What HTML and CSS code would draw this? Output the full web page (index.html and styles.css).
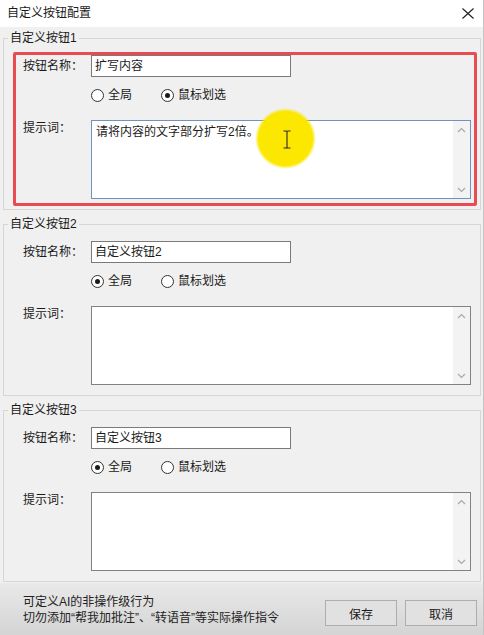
FILE: index.html
```html
<!DOCTYPE html>
<html lang="zh-CN">
<head>
<meta charset="utf-8">
<title>自定义按钮配置</title>
<link rel="stylesheet" href="styles.css">
</head>
<body>
<div class="window">
  <div class="titlebar">
    <span class="title">自定义按钮配置</span>
    <svg class="close" width="12" height="11" viewBox="0 0 12 11"><path d="M0.5 0.5L11.5 10.5M11.5 0.5L0.5 10.5" stroke="#1e1e1e" stroke-width="1.1" fill="none"/></svg>
  </div>

  <div class="content">
    <fieldset class="group">
      <legend>自定义按钮1</legend>
      <div class="name-row"><span class="lbl">按钮名称：</span><div class="input">扩写内容</div></div>
      <div class="radio-row">
        <span class="radio"><i class="circle"></i>全局</span>
        <span class="radio"><i class="circle checked"></i>鼠标划选</span>
      </div>
      <div class="prompt-row"><span class="lbl">提示词：</span>
        <div class="textbox focused">
          <div class="text">请将内容的文字部分扩写2倍。</div>
          <div class="scrollbar">
            <span class="sb-btn"><svg width="9" height="6" viewBox="0 0 9 6"><path d="M1 5L4.5 1.5L8 5" stroke="#a9a9a9" stroke-width="1.2" fill="none"/></svg></span>
            <span class="sb-btn"><svg width="9" height="6" viewBox="0 0 9 6"><path d="M1 1L4.5 4.5L8 1" stroke="#a9a9a9" stroke-width="1.2" fill="none"/></svg></span>
          </div>
        </div>
      </div>
    </fieldset>

    <fieldset class="group">
      <legend>自定义按钮2</legend>
      <div class="name-row"><span class="lbl">按钮名称：</span><div class="input">自定义按钮2</div></div>
      <div class="radio-row">
        <span class="radio"><i class="circle checked"></i>全局</span>
        <span class="radio"><i class="circle"></i>鼠标划选</span>
      </div>
      <div class="prompt-row"><span class="lbl">提示词：</span>
        <div class="textbox">
          <div class="text"></div>
          <div class="scrollbar">
            <span class="sb-btn"><svg width="9" height="6" viewBox="0 0 9 6"><path d="M1 5L4.5 1.5L8 5" stroke="#a9a9a9" stroke-width="1.2" fill="none"/></svg></span>
            <span class="sb-btn"><svg width="9" height="6" viewBox="0 0 9 6"><path d="M1 1L4.5 4.5L8 1" stroke="#a9a9a9" stroke-width="1.2" fill="none"/></svg></span>
          </div>
        </div>
      </div>
    </fieldset>

    <fieldset class="group last">
      <legend>自定义按钮3</legend>
      <div class="name-row"><span class="lbl">按钮名称：</span><div class="input">自定义按钮3</div></div>
      <div class="radio-row">
        <span class="radio"><i class="circle checked"></i>全局</span>
        <span class="radio"><i class="circle"></i>鼠标划选</span>
      </div>
      <div class="prompt-row"><span class="lbl">提示词：</span>
        <div class="textbox">
          <div class="text"></div>
          <div class="scrollbar">
            <span class="sb-btn"><svg width="9" height="6" viewBox="0 0 9 6"><path d="M1 5L4.5 1.5L8 5" stroke="#a9a9a9" stroke-width="1.2" fill="none"/></svg></span>
            <span class="sb-btn"><svg width="9" height="6" viewBox="0 0 9 6"><path d="M1 1L4.5 4.5L8 1" stroke="#a9a9a9" stroke-width="1.2" fill="none"/></svg></span>
          </div>
        </div>
      </div>
    </fieldset>
  </div>

  <div class="footer">
    <div class="hint">
      <div>可定义AI的非操作级行为</div>
      <div>切勿添加“帮我加批注”、“转语音”等实际操作指令</div>
    </div>
    <div class="buttons">
      <button class="btn">保存</button>
      <button class="btn">取消</button>
    </div>
  </div>

  <div class="annot-frame"></div>
  <div class="cursor-spot">
    <svg class="ibeam" width="10" height="19" viewBox="0 0 10 19"><path d="M1.5 1H4Q5 1 5 2.2Q5 1 6 1H8.5M5 2V17M1.5 18H4Q5 18 5 16.8Q5 18 6 18H8.5" stroke="#2a2a2a" stroke-width="1.1" fill="none"/></svg>
  </div>
</div>
</body>
</html>
```

FILE: styles.css
```css
* { box-sizing: border-box; }

html, body {
  margin: 0;
  padding: 0;
  background: #f0f0f0;
}

body {
  font-family: "Liberation Sans", "Noto Sans CJK SC", sans-serif;
  font-size: 12px;
  color: #1a1a1a;
}

.window {
  position: relative;
  width: 484px;
  height: 635px;
  display: flex;
  flex-direction: column;
  overflow: hidden;
  background: #f0f0f0;
  border-right: 1px solid #c4c4c4;
}

.titlebar {
  height: 27px;
  flex: none;
  background: #ffffff;
  display: flex;
  align-items: center;
  justify-content: space-between;
  padding: 0 9px 1px 7px;
}

.title {
  font-size: 12px;
  line-height: 16px;
  color: #1a1a1a;
}

.close { display: block; }

.content {
  flex: none;
  padding: 3px 2px 0 3px;
}

.group {
  margin: 0 0 6px 0;
  padding: 9px 0 10px 0;
  border: 1px solid #d6d6d6;
  min-width: 0;
}

.group.last { margin-bottom: 1px; }

.group legend {
  margin-left: 4px;
  padding: 0 2px;
  font-size: 12px;
  line-height: 16px;
  color: #1a1a1a;
}

.lbl {
  width: 68px;
  flex: none;
  line-height: 16px;
  color: #1a1a1a;
}

.name-row {
  display: flex;
  align-items: center;
  padding-left: 19px;
  height: 22px;
}

.input {
  width: 200px;
  height: 22px;
  border: 1px solid #7a7a7a;
  background: #ffffff;
  padding-left: 3px;
  line-height: 20px;
  color: #1a1a1a;
}

.radio-row {
  display: flex;
  align-items: center;
  height: 16px;
  margin-top: 10px;
  padding-left: 87px;
}

.radio {
  display: flex;
  align-items: center;
  width: 70px;
  line-height: 16px;
}

.circle {
  width: 13px;
  height: 13px;
  border: 1px solid #333333;
  border-radius: 50%;
  background: #ffffff;
  margin-right: 4px;
  display: flex;
  align-items: center;
  justify-content: center;
  flex: none;
}

.circle.checked::after {
  content: "";
  width: 5px;
  height: 5px;
  border-radius: 50%;
  background: #1a1a1a;
}

.prompt-row {
  display: flex;
  align-items: flex-start;
  padding-left: 19px;
  margin-top: 17px;
}

.textbox {
  width: 380px;
  height: 79px;
  border: 1px solid #828282;
  background: #ffffff;
  display: flex;
}

.textbox.focused { border-color: #6f92bf; }

.textbox .text {
  flex: 1;
  padding: 3px 4px;
  line-height: 16px;
  color: #1a1a1a;
}

.scrollbar {
  width: 17px;
  flex: none;
  background: #f3f3f3;
  display: flex;
  flex-direction: column;
  justify-content: space-between;
}

.sb-btn {
  width: 17px;
  height: 17px;
  display: flex;
  align-items: center;
  justify-content: center;
}

.footer {
  flex: 1;
  display: flex;
  justify-content: space-between;
  align-items: flex-start;
  padding: 11px 6px 0 23px;
  background: linear-gradient(#e9e9e9, #d4d4d4);
}

.hint {
  line-height: 16px;
  color: #222222;
}

.buttons {
  display: flex;
  gap: 8px;
  margin-top: 6px;
}

.btn {
  width: 72px;
  height: 26px;
  border: 1px solid #adadad;
  background: #e1e1e1;
  font-family: "Liberation Sans", "Noto Sans CJK SC", sans-serif;
  font-size: 12px;
  color: #1a1a1a;
  padding: 0;
}

/* annotation overlays drawn over the dialog */
.annot-frame {
  position: absolute;
  left: 13px;
  top: 52px;
  width: 464px;
  height: 154px;
  border: 3px solid #ea4b50;
  border-radius: 2px;
}

.cursor-spot {
  position: absolute;
  left: 255px;
  top: 108px;
  width: 61px;
  height: 61px;
  border-radius: 50%;
  background: radial-gradient(circle, #fbe700 0, #fbe700 27px, rgba(251, 231, 0, 0) 30.5px);
}

.ibeam {
  position: absolute;
  left: 27px;
  top: 22px;
}
```
